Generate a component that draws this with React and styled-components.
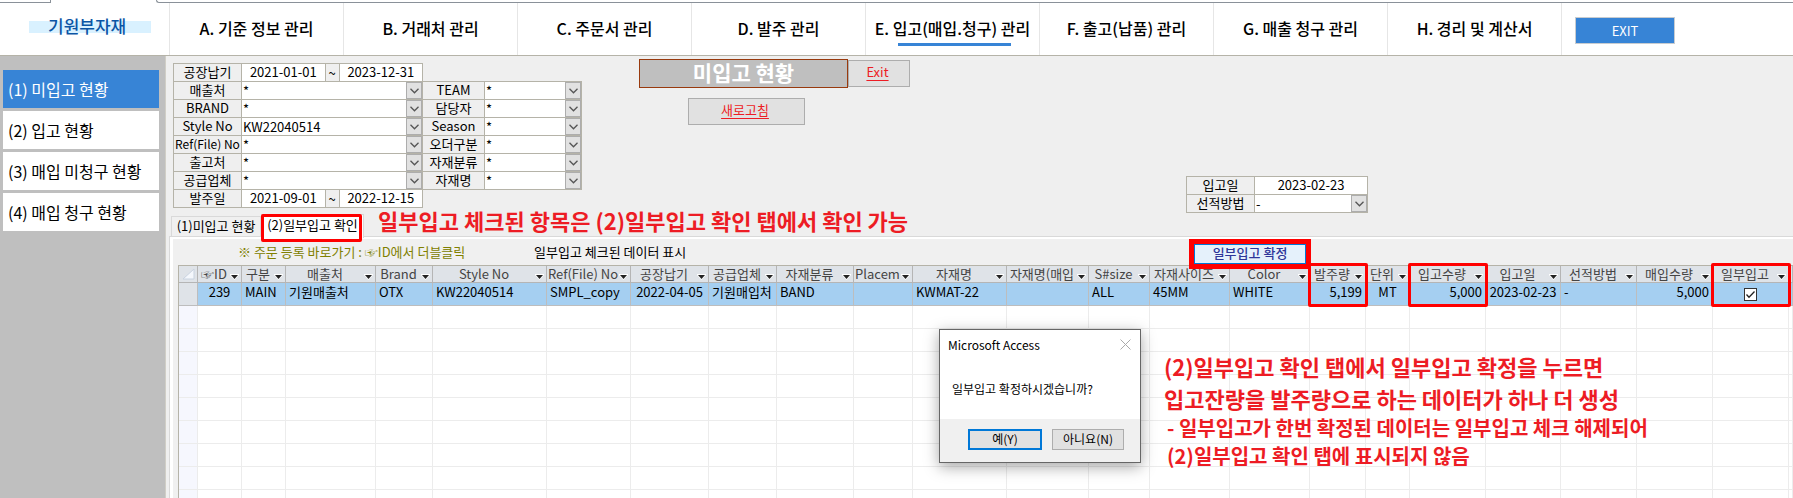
// App.jsx shows the receiving (입고) screen: top menu, side menu,
// search conditions, the partial receipt datasheet and the confirm dialog
import { useState } from 'react';
import styled, { createGlobalStyle } from 'styled-components';

const GlobalStyle = createGlobalStyle`
  * {
    box-sizing: border-box;
  }

  body {
    margin: 0;
    background: #efefef;
    color: #000;
    font-family: 'Noto Sans CJK KR', 'Noto Sans', sans-serif;
    font-size: 13px;
    line-height: 17px;
  }

  button, input, select {
    margin: 0;
    font: inherit;
    color: inherit;
  }
`;

const Shell = styled.div`
  display: flex;
  flex-direction: column;
  height: 100vh;
  overflow: hidden;
  position: relative;
`;

const WindowEdge = styled.div`
  display: flex;
  height: 3px;
  background: #fff;
`;

const EdgeTab = styled.span`
  width: 51px;
  margin-right: 105px;
  border: solid #8a9199;
  border-width: 0 1px 1px 0;
`;

const EdgeLine = styled.span`
  flex: 1;
  border: solid #8a9199;
  border-width: 0 0 1px 1px;
  border-bottom-left-radius: 3px;
`;

const Header = styled.header`
  display: flex;
  height: 53px;
  background: #fff;
  border-bottom: 1px solid #b5b3a8;
`;

const Brand = styled.div`
  width: 169px;
  padding: 13px 18px 0 29px;
`;

const BrandName = styled.span`
  display: block;
  padding-left: 19px;
  background: linear-gradient(#d9f1ff, #d9f1ff) 0 5px / 100% 12px no-repeat;
  color: #0b55a5;
  font-size: 17px;
  font-weight: 500;
  line-height: 20px;
`;

const Nav = styled.nav`
  display: flex;
  flex: 0 1 1393px;
  border-right: 1px solid #e6e6e6;
`;

const NavLink = styled.a`
  display: flex;
  flex: 1;
  justify-content: center;
  position: relative;
  padding-top: 15px;
  border-left: 1px solid #e6e6e6;
  color: #000;
  font-size: 16px;
  font-weight: 500;
  line-height: 20px;
  text-decoration: none;
  white-space: nowrap;

  &::after {
    content: '';
    display: ${({ $active }) => ($active ? 'block' : 'none')};
    position: absolute;
    top: 40px;
    left: 32px;
    right: 28px;
    height: 3px;
    background: #3784d6;
  }
`;

const HeaderExit = styled.button`
  width: 100px;
  height: 27px;
  margin: 14px 0 0 13px;
  padding: 0;
  background: #3784d6;
  border: 1px solid #c8ccd0;
  color: #fff;
`;

const Body = styled.div`
  display: flex;
  flex: 1;
  min-height: 0;
`;

const Sidebar = styled.nav`
  display: flex;
  flex-direction: column;
  gap: 3px;
  flex: 0 0 166px;
  padding: 14px 6px 0 3px;
  background: #bfbfbf;
  border-right: 1px solid #d0cec6;
`;

const SideLink = styled.a`
  display: flex;
  align-items: center;
  height: 38px;
  padding-left: 5px;
  background: ${({ $active }) => ($active ? '#3784d6' : '#fff')};
  color: ${({ $active }) => ($active ? '#fff' : '#000')};
  font-size: 16px;
  text-decoration: none;
  white-space: nowrap;
`;

const Main = styled.main`
  display: flex;
  flex-direction: column;
  flex: 1;
  min-width: 0;
  padding-left: 3px;
`;

const Conditions = styled.div`
  display: flex;
  align-items: flex-start;
  padding: 3px 0 0 4px;
`;

const FieldGroup = styled.div`
  flex: none;
  width: ${({ $width }) => $width}px;
  margin: ${({ $top }) => $top}px 0 0 ${({ $left = 0 }) => $left}px;
  border: 1px solid #b5b3a8;
  border-bottom: 0;
`;

const FieldRow = styled.div`
  display: flex;
  height: 18px;
  border-bottom: 1px solid #b5b3a8;
`;

const FieldLabel = styled.label`
  flex: 0 0 ${({ $width }) => $width}px;
  border-right: 1px solid #b5b3a8;
  font-size: ${({ $small }) => ($small ? 12 : 13)}px;
  line-height: 15px;
  text-align: center;
  white-space: nowrap;
`;

const DateInput = styled.input`
  flex: 1 1 0;
  min-width: 0;
  height: 17px;
  padding: 0 0 2px;
  border: 0;
  background: #fff;
  text-align: center;
`;

const Tilde = styled.span`
  flex: 0 0 15px;
  border: solid #b5b3a8;
  border-width: 0 1px;
  text-align: center;
`;

const ComboSelect = styled.select`
  flex: 1;
  min-width: 0;
  height: 17px;
  padding: 0 0 2px 1px;
  appearance: none;
  border: 0;
  border-radius: 0;
  background: #fff;
`;

const ComboArrow = styled.span`
  display: flex;
  align-items: center;
  justify-content: center;
  flex: 0 0 16px;
  background: #e1e1e1;
  border: 1px solid #adadad;
`;

const TitleBlock = styled.div`
  margin-left: 57px;
`;

const TitleRow = styled.div`
  display: flex;
  align-items: center;
  margin-bottom: 10px;
`;

const Title = styled.h1`
  width: 209px;
  height: 29px;
  margin: 0;
  background: #bfbfbf;
  border: 1px solid #993a0e;
  color: #fff;
  font-size: 21px;
  line-height: 24px;
  text-align: center;
`;

const LinkButton = styled.button`
  display: block;
  width: ${({ $width }) => $width}px;
  height: 27px;
  margin-left: ${({ $left = 0 }) => $left}px;
  padding: 0 3px 4px 0;
  background: #e1e1e1;
  border: 1px solid #adadad;
  color: #ed1c24;
  text-decoration: underline;
  text-underline-offset: 3px;
`;

const TabBar = styled.div`
  display: flex;
  align-items: flex-end;
  height: 23px;
  padding-left: 2px;
`;

const Tab = styled.button`
  position: relative;
  height: ${({ $active }) => ($active ? 24 : 20)}px;
  width: ${({ $active }) => ($active ? 103 : 90)}px;
  margin-bottom: ${({ $active }) => ($active ? -2 : 0)}px;
  padding: 0 0 ${({ $active }) => ($active ? 5 : 2)}px;
  background: ${({ $active }) => ($active ? '#fff' : '#f0f0f0')};
  border: solid #d9d9d9;
  border-width: 1px 1px 0;
  white-space: nowrap;
  z-index: 1;
`;

const TabMark = styled.span`
  position: absolute;
  top: -1px;
  left: -1px;
  width: 101px;
  height: 28px;
  border: 3px solid #f00;
  border-radius: 2px;
`;

const Remark = styled.p`
  margin: 0;
  padding-left: ${({ $small }) => ($small ? 3 : 0)}px;
  color: #ed1c24;
  font-size: ${({ $small }) => ($small ? 20 : 22)}px;
  font-weight: 700;
  line-height: ${({ $small }) => ($small ? 28 : 32)}px;
  white-space: nowrap;
`;

const TabRemark = styled(Remark)`
  padding-left: 14px;
`;

const TabPage = styled.section`
  flex: 1;
  min-height: 0;
  padding: 2px 0 0 3px;
  background: #fff;
  border: solid #d9d9d9;
  border-width: 1px 0 0 1px;
`;

const PageInner = styled.div`
  height: 100%;
  padding-left: 5px;
  background: #f0f0f0;
`;

const NoteRow = styled.div`
  display: flex;
  height: 26px;
  padding: 4px 0 0 60px;
`;

const Note = styled.span`
  flex: 0 0 ${({ $width }) => $width}px;
  color: ${({ $olive }) => ($olive ? '#808000' : '#000')};
  white-space: nowrap;
`;

const ConfirmButton = styled.button`
  position: relative;
  z-index: 3;
  width: 112px;
  height: 20px;
  margin-top: 1px;
  padding: 0 0 3px;
  background: #e5f1fb;
  border: 1px solid #0078d7;
  outline: 5px solid #f00;
  color: #2f3699;
  font-weight: 500;
  line-height: 15px;
`;

const Datasheet = styled.table`
  width: 100%;
  table-layout: fixed;
  border-spacing: 0;
  border: solid #b5b3a8;
  border-width: 1px 0 0 1px;
  background: #fff;
`;

const HeadCell = styled.th`
  position: relative;
  height: 17px;
  padding: 0;
  background: #dfe3e8;
  border: solid #b5b5b5;
  border-width: 0 1px 1px 0;
  color: #444;
  font-weight: 400;
`;

const HeadContent = styled.span`
  display: flex;
  align-items: flex-end;
  height: 16px;
`;

const HeadText = styled.span`
  flex: 1;
  min-width: 0;
  line-height: 17px;
  text-align: center;
  white-space: nowrap;
`;

const SortArrow = styled.svg`
  flex: 0 0 9px;
  margin: 0 2px 2px 0;
`;

const ColumnMark = styled.span`
  position: absolute;
  z-index: 2;
  top: -3px;
  left: -2px;
  right: -3px;
  height: 44px;
  border: 3px solid #f00;
  border-radius: 2px;
`;

const Cell = styled.td`
  height: 23px;
  padding: ${({ $align }) => ($align === 'center' ? '0' : '0 3px')};
  background: ${({ $selected }) => ($selected ? '#a5cff1' : '#fff')};
  border: solid ${({ $selected }) => ($selected ? '#bdbdbd' : '#ececec')};
  border-width: 0 1px 1px 0;
  overflow: hidden;
  text-align: ${({ $align = 'left' }) => $align};
  vertical-align: top;
  white-space: nowrap;
`;

const RowHandle = styled(Cell)`
  background: ${({ $selected }) => ($selected ? '#dfe3e8' : '#f6f7fe')};
`;

const CheckLabel = styled.label`
  display: inline-block;
  position: relative;
  width: 13px;
  height: 13px;
  margin-top: 5px;

  input {
    display: block;
    width: 13px;
    height: 13px;
    appearance: none;
    background: #fff;
    border: 1px solid #333;
  }

  svg {
    position: absolute;
    top: 0;
    left: 0;
    pointer-events: none;
  }
`;

const Remarks = styled.div`
  position: absolute;
  top: 350px;
  left: 1164px;
`;

const Dialog = styled.div`
  position: absolute;
  z-index: 4;
  top: 329px;
  left: 939px;
  width: 202px;
  background: #fff;
  border: 1px solid #666;
  box-shadow: 0 4px 14px rgba(0, 0, 0, 0.35);
  font-size: 12px;
`;

const DialogHead = styled.div`
  display: flex;
  align-items: center;
  justify-content: space-between;
  height: 29px;
  padding: 0 9px 0 8px;
`;

const DialogTitle = styled.h2`
  margin: 0;
  font-size: 12px;
  font-weight: 400;
`;

const CloseButton = styled.button`
  display: flex;
  padding: 0;
  background: none;
  border: 0;
`;

const DialogText = styled.p`
  margin: 0;
  padding: 21px 0 22px 12px;
`;

const DialogFoot = styled.div`
  display: flex;
  gap: 10px;
  padding: 10px 16px 12px 28px;
  background: #f0f0f0;
`;

const DialogButton = styled.button`
  flex: 1;
  height: 21px;
  padding: 0 0 2px;
  background: #e1e1e1;
  border: ${({ $primary }) => ($primary ? '2px solid #0078d7' : '1px solid #adadad')};
  line-height: 15px;
`;

const menus = [
  'A. 기준 정보 관리',
  'B. 거래처 관리',
  'C. 주문서 관리',
  'D. 발주 관리',
  'E. 입고(매입.청구) 관리',
  'F. 출고(납품) 관리',
  'G. 매출 청구 관리',
  'H. 경리 및 계산서',
];

const sideMenus = [
  '(1) 미입고 현황',
  '(2) 입고 현황',
  '(3) 매입 미청구 현황',
  '(4) 매입 청구 현황',
];

const leftCombos = [
  ['매출처', '*'],
  ['BRAND', '*'],
  ['Style No', 'KW22040514'],
  ['Ref(File) No', '*'],
  ['출고처', '*'],
  ['공급업체', '*'],
];

const rightCombos = [
  ['TEAM', '*'],
  ['담당자', '*'],
  ['Season', '*'],
  ['오더구분', '*'],
  ['자재분류', '*'],
  ['자재명', '*'],
];

const columns = [
  { title: '☞ID', width: 44, value: '239', align: 'center' },
  { title: '구분', width: 44, value: 'MAIN' },
  { title: '매출처', width: 90, value: '기원매출처' },
  { title: 'Brand', width: 57, value: 'OTX' },
  { title: 'Style No', width: 114, value: 'KW22040514' },
  { title: 'Ref(File) No', width: 84, value: 'SMPL_copy' },
  { title: '공장납기', width: 78, value: '2022-04-05', align: 'center' },
  { title: '공급업체', width: 68, value: '기원매입처' },
  { title: '자재분류', width: 77, value: 'BAND' },
  { title: 'Placem', width: 59, value: '' },
  { title: '자재명', width: 94, value: 'KWMAT-22' },
  { title: '자재명(매입', width: 82, value: '' },
  { title: 'S#size', width: 61, value: 'ALL' },
  { title: '자재사이즈', width: 80, value: '45MM' },
  { title: 'Color', width: 80, value: 'WHITE' },
  { title: '발주량', width: 56, value: '5,199', align: 'right', marked: true },
  { title: '단위', width: 44, value: 'MT', align: 'center' },
  { title: '입고수량', width: 76, value: '5,000', align: 'right', marked: true },
  { title: '입고일', width: 75, value: '2023-02-23', align: 'center' },
  { title: '선적방법', width: 76, value: '-' },
  { title: '매입수량', width: 76, value: '5,000', align: 'right' },
  { title: '일부입고', width: 76, value: true, align: 'center', marked: true },
];

const emptyRows = [1, 2, 3, 4, 5, 6, 7, 8, 9];

const Combo = ({ id, label, value, labelWidth }) => (
  <FieldRow>
    <FieldLabel htmlFor={id} $width={labelWidth} $small={label.length > 10}>
      {label}
    </FieldLabel>
    <ComboSelect id={id} defaultValue={value}>
      <option value={value}>{value}</option>
    </ComboSelect>
    <ComboArrow>
      <svg width='9' height='6' viewBox='0 0 9 6' fill='none' stroke='#555' strokeWidth='1.3'>
        <path d='M0.5 0.8 L4.5 4.8 L8.5 0.8' />
      </svg>
    </ComboArrow>
  </FieldRow>
);

const DateRange = ({ id, label, from, to }) => (
  <FieldRow>
    <FieldLabel htmlFor={id} $width={68}>
      {label}
    </FieldLabel>
    <DateInput id={id} defaultValue={from} />
    <Tilde>~</Tilde>
    <DateInput aria-label={label} defaultValue={to} />
  </FieldRow>
);

const App = () => {
  const [checked, setChecked] = useState(true);

  return (
    <Shell>
      <GlobalStyle />
      <WindowEdge>
        <EdgeTab />
        <EdgeLine />
      </WindowEdge>
      <Header>
        <Brand>
          <BrandName>기원부자재</BrandName>
        </Brand>
        <Nav>
          {menus.map((menu) => (
            <NavLink href='#' key={menu} $active={menu.startsWith('E')}>
              {menu}
            </NavLink>
          ))}
        </Nav>
        <HeaderExit>EXIT</HeaderExit>
      </Header>
      <Body>
        <Sidebar>
          {sideMenus.map((menu, i) => (
            <SideLink href='#' key={menu} $active={i === 0}>
              {menu}
            </SideLink>
          ))}
        </Sidebar>
        <Main>
          <Conditions>
            <FieldGroup $width={250} $top={4}>
              <DateRange id='due' label='공장납기' from='2021-01-01' to='2023-12-31' />
              {leftCombos.map(([label, value]) => (
                <Combo key={label} id={label} label={label} value={value} labelWidth={68} />
              ))}
              <DateRange id='ordered' label='발주일' from='2021-09-01' to='2022-12-15' />
            </FieldGroup>
            <FieldGroup $width={160} $top={22} $left={-1}>
              {rightCombos.map(([label, value]) => (
                <Combo key={label} id={label} label={label} value={value} labelWidth={62} />
              ))}
            </FieldGroup>
            <TitleBlock>
              <TitleRow>
                <Title>미입고 현황</Title>
                <LinkButton $width={62}>Exit</LinkButton>
              </TitleRow>
              <LinkButton $width={117} $left={49}>
                새로고침
              </LinkButton>
            </TitleBlock>
            <FieldGroup $width={182} $top={117} $left={276}>
              <FieldRow>
                <FieldLabel htmlFor='received' $width={68}>
                  입고일
                </FieldLabel>
                <DateInput id='received' defaultValue='2023-02-23' />
              </FieldRow>
              <Combo id='shipping' label='선적방법' value='-' labelWidth={68} />
            </FieldGroup>
          </Conditions>
          <TabBar>
            <Tab>(1)미입고 현황</Tab>
            <Tab $active>
              (2)일부입고 확인
              <TabMark />
            </Tab>
            <TabRemark>일부입고 체크된 항목은 (2)일부입고 확인 탭에서 확인 가능</TabRemark>
          </TabBar>
          <TabPage>
            <PageInner>
              <NoteRow>
                <Note $width={296} $olive>
                  ※ 주문 등록 바로가기 : ☞ID에서 더블클릭
                </Note>
                <Note $width={660}>일부입고 체크된 데이터 표시</Note>
                <ConfirmButton>일부입고 확정</ConfirmButton>
              </NoteRow>
              <Datasheet>
                <colgroup>
                  <col width='19' />
                  {columns.map((column) => (
                    <col key={column.title} width={column.width} />
                  ))}
                  <col />
                </colgroup>
                <thead>
                  <tr>
                    <HeadCell>
                      <HeadContent>
                        <svg width='18' height='16' viewBox='0 0 18 16'>
                          <path d='M15 3 V13 H4 Z' fill='#f4f7fc' stroke='#c9d3e0' />
                        </svg>
                      </HeadContent>
                    </HeadCell>
                    {columns.map((column) => (
                      <HeadCell key={column.title}>
                        <HeadContent>
                          <HeadText>{column.title}</HeadText>
                          <SortArrow width='9' height='6' viewBox='0 0 9 6'>
                            <path d='M0 0 H9 V1 L4.5 6 L0 1 Z' fill='#fff' />
                            <path d='M1 1 H8 L4.5 5 Z' fill='#222' />
                          </SortArrow>
                        </HeadContent>
                        {column.marked && <ColumnMark />}
                      </HeadCell>
                    ))}
                    <HeadCell />
                  </tr>
                </thead>
                <tbody>
                  <tr>
                    <RowHandle $selected />
                    {columns.map((column) => (
                      <Cell key={column.title} $align={column.align} $selected>
                        {column.value === true ? (
                          <CheckLabel>
                            <input
                              type='checkbox'
                              aria-label={column.title}
                              checked={checked}
                              onChange={() => setChecked(!checked)}
                            />
                            {checked && (
                              <svg width='13' height='13' viewBox='0 0 13 13' fill='none' stroke='#222' strokeWidth='1.3'>
                                <path d='M2.5 6.5 L5 9.3 L10.5 3.5' />
                              </svg>
                            )}
                          </CheckLabel>
                        ) : (
                          column.value
                        )}
                      </Cell>
                    ))}
                    <Cell $selected />
                  </tr>
                  {emptyRows.map((row) => (
                    <tr key={row}>
                      <RowHandle />
                      {columns.map((column) => (
                        <Cell key={column.title} />
                      ))}
                      <Cell />
                    </tr>
                  ))}
                </tbody>
              </Datasheet>
            </PageInner>
          </TabPage>
        </Main>
      </Body>
      <Remarks>
        <Remark>(2)일부입고 확인 탭에서 일부입고 확정을 누르면</Remark>
        <Remark>입고잔량을 발주량으로 하는 데이터가 하나 더 생성</Remark>
        <Remark $small>- 일부입고가 한번 확정된 데이터는 일부입고 체크 해제되어</Remark>
        <Remark $small>(2)일부입고 확인 탭에 표시되지 않음</Remark>
      </Remarks>
      <Dialog role='dialog' aria-label='Microsoft Access'>
        <DialogHead>
          <DialogTitle>Microsoft Access</DialogTitle>
          <CloseButton aria-label='닫기'>
            <svg width='11' height='11' viewBox='0 0 11 11' stroke='#aaa'>
              <path d='M0.5 0.5 L10.5 10.5 M10.5 0.5 L0.5 10.5' />
            </svg>
          </CloseButton>
        </DialogHead>
        <DialogText>일부입고 확정하시겠습니까?</DialogText>
        <DialogFoot>
          <DialogButton $primary>예(Y)</DialogButton>
          <DialogButton>아니요(N)</DialogButton>
        </DialogFoot>
      </Dialog>
    </Shell>
  );
};

export default App;
